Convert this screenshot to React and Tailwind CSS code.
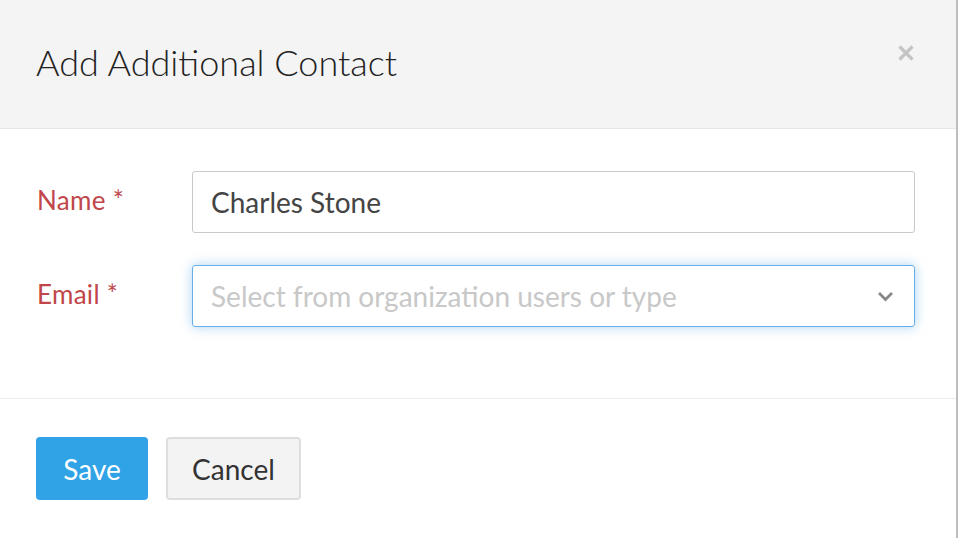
import React from "react";

export default function App() {
  return (
    <div className="w-[958px] h-[538px] bg-white flex" style={{ fontFamily: "Lato, 'Open Sans', sans-serif" }}>
      <div className="flex-1 flex flex-col">
        <div className="h-[129px] bg-[#f4f4f4] border-b border-[#e6e6e6] flex items-start justify-between pl-[36px] pr-[41px]">
          <h1 className="mt-[40px] text-[36px] font-light text-[#222] leading-[44px]">Add Additional Contact</h1>
          <svg className="mt-[44px]" width="18" height="18" viewBox="0 0 18 18">
            <path d="M2.5 2.5 L15.5 15.5 M15.5 2.5 L2.5 15.5" stroke="#c4c4c4" strokeWidth="3.2" />
          </svg>
        </div>
        <div className="h-[270px] border-b border-[#ececec] pt-[42px] pl-[37px] pr-[41px] flex flex-col gap-[32px]">
          <div className="flex items-start">
            <label className="w-[155px] pt-[13px] text-[26px] leading-[32px] tracking-[0.3px] text-[#c0464a]">Name *</label>
            <div className="flex-1 h-[62px] border border-[#c9c9c9] rounded-[3px] flex items-center px-[18px] text-[28px] text-[#444]">Charles Stone</div>
          </div>
          <div className="flex items-start">
            <label className="w-[155px] pt-[13px] text-[26px] leading-[32px] tracking-[0.3px] text-[#c0464a]">Email *</label>
            <div className="flex-1 h-[62px] border border-[#66afe9] rounded-[3px] shadow-[0_0_12px_rgba(102,175,233,0.55)] flex items-center justify-between pl-[18px] pr-[20px] text-[28px] text-[#c8c8c8]">
              <span>Select from organization users or type</span>
              <svg width="17" height="11" viewBox="0 0 17 11">
                <path d="M2 2 L8.5 8.5 L15 2" fill="none" stroke="#888" strokeWidth="2.8" />
              </svg>
            </div>
          </div>
        </div>
        <div className="pt-[38px] pl-[36px] flex gap-[18px]">
          <button className="w-[112px] h-[63px] rounded-[4px] bg-[#2fa3e6] text-white text-[28px]">Save</button>
          <button className="w-[135px] h-[63px] rounded-[4px] bg-[#f3f3f3] border-2 border-[#dedede] text-[#333] text-[28px]">Cancel</button>
        </div>
      </div>
      <div className="w-[2px] bg-[#bdbdbd]" />
    </div>
  );
}
